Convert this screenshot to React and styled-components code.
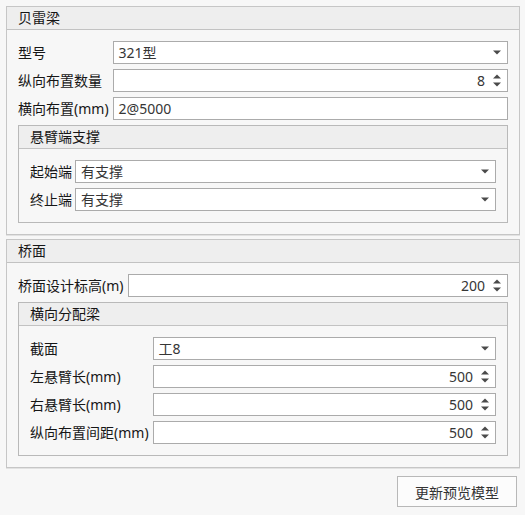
import React from 'react';
import styled, { createGlobalStyle } from 'styled-components';

const GlobalStyle = createGlobalStyle`
  html, body {
    margin: 0;
    padding: 0;
    background: #f7f7f7;
  }
  body {
    font-family: 'Noto Sans', 'Noto Sans CJK SC', sans-serif;
    font-size: 14px;
    color: #161616;
  }
`;

const Page = styled.div`
  width: 525px;
  height: 515px;
  box-sizing: border-box;
  padding: 6px 5px 0 6px;
  background: #f7f7f7;
  display: flex;
  flex-direction: column;
  gap: 4px;
`;

const Group = styled.section`
  border: 1px solid ${(p) => (p.$inner ? '#b9b9b9' : '#c6c6c6')};
  background: #f7f7f7;
  ${(p) => (p.$inner ? 'grid-column: 1 / -1;' : 'box-shadow: 0 1px 0 #e2e2e2;')}
`;

const GroupHeader = styled.div`
  height: 22px;
  line-height: 22px;
  padding-left: 11px;
  background: #eeeeee;
  border-bottom: 1px solid #c2c2c2;
  color: #161616;
`;

const GroupBody = styled.div`
  display: grid;
  grid-template-columns: auto 1fr;
  column-gap: ${(p) => p.$gap || 4}px;
  row-gap: 5px;
  padding: 11px;
  align-items: center;
`;

const Label = styled.div`
  white-space: nowrap;
  line-height: 23px;
`;

const Field = styled.div`
  height: 21px;
  border: 1px solid #ababab;
  background: #fff;
  display: flex;
  align-items: center;
  padding: 0 6px 0 5px;
  color: #363636;
  line-height: 21px;
`;

const Value = styled.span`
  flex: 1;
  text-align: ${(p) => (p.$right ? 'right' : 'left')};
  padding-right: ${(p) => (p.$right ? 8 : 0)}px;
  white-space: nowrap;
`;

const Spinner = styled.div`
  display: flex;
  flex-direction: column;
  gap: 3px;
  width: 8px;
  align-items: center;
`;

const Arrow = styled.svg`
  display: block;
  flex: none;
`;

const Footer = styled.div`
  display: flex;
  justify-content: flex-end;
  padding: 4px 3px 0 0;
`;

const Button = styled.button`
  width: 120px;
  height: 31px;
  border: 1px solid #b8b8b8;
  background: #fcfcfc;
  font-family: inherit;
  font-size: 14px;
  color: #333;
  padding: 0;
  cursor: pointer;
`;

const Caret = () => (
  <Arrow width="8" height="5" viewBox="0 0 8 5">
    <path d="M0 0.5 H8 L4 4.5 Z" fill="#4a4a4a" />
  </Arrow>
);

const Up = () => (
  <Arrow width="8" height="5" viewBox="0 0 8 5">
    <path d="M0 4.5 H8 L4 0.5 Z" fill="#4a4a4a" />
  </Arrow>
);

function Select({ value }) {
  return (
    <Field>
      <Value>{value}</Value>
      <Caret />
    </Field>
  );
}

function NumberBox({ value }) {
  return (
    <Field>
      <Value $right>{value}</Value>
      <Spinner>
        <Up />
        <Caret />
      </Spinner>
    </Field>
  );
}

function TextBox({ value }) {
  return (
    <Field>
      <Value>{value}</Value>
    </Field>
  );
}

export default function App() {
  return (
    <>
      <GlobalStyle />
      <Page>
        <Group>
          <GroupHeader>贝雷梁</GroupHeader>
          <GroupBody>
            <Label>型号</Label>
            <Select value="321型" />
            <Label>纵向布置数量</Label>
            <NumberBox value="8" />
            <Label>横向布置(mm)</Label>
            <TextBox value="2@5000" />
            <Group $inner>
              <GroupHeader>悬臂端支撑</GroupHeader>
              <GroupBody $gap={3}>
                <Label>起始端</Label>
                <Select value="有支撑" />
                <Label>终止端</Label>
                <Select value="有支撑" />
              </GroupBody>
            </Group>
          </GroupBody>
        </Group>

        <Group>
          <GroupHeader>桥面</GroupHeader>
          <GroupBody>
            <Label>桥面设计标高(m)</Label>
            <NumberBox value="200" />
            <Group $inner>
              <GroupHeader>横向分配梁</GroupHeader>
              <GroupBody>
                <Label>截面</Label>
                <Select value="工8" />
                <Label>左悬臂长(mm)</Label>
                <NumberBox value="500" />
                <Label>右悬臂长(mm)</Label>
                <NumberBox value="500" />
                <Label>纵向布置间距(mm)</Label>
                <NumberBox value="500" />
              </GroupBody>
            </Group>
          </GroupBody>
        </Group>

        <Footer>
          <Button>更新预览模型</Button>
        </Footer>
      </Page>
    </>
  );
}
